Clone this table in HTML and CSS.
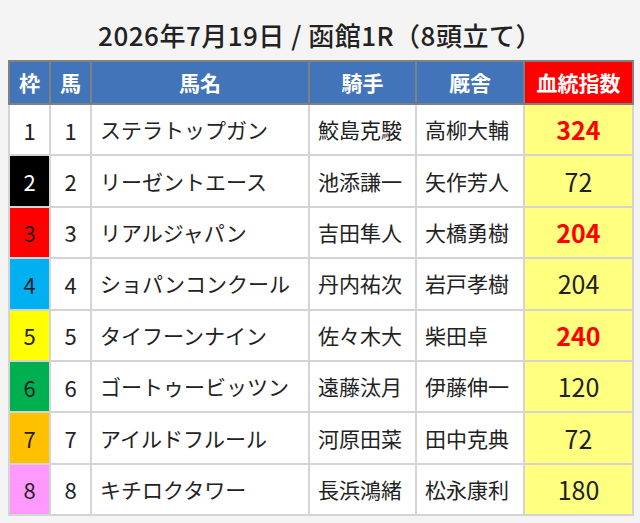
FILE: index.html
```html
<!DOCTYPE html>
<html lang="ja">
<head>
<meta charset="utf-8">
<link rel="stylesheet" href="styles.css">
</head>
<body>
<h1 class="title">2026年7月19日 / 函館1R（8頭立て）</h1>
<table class="race">
  <colgroup>
    <col class="c-waku"><col class="c-uma"><col class="c-name"><col class="c-jockey"><col class="c-trainer"><col class="c-index">
  </colgroup>
  <thead>
    <tr><th>枠</th><th>馬</th><th>馬名</th><th>騎手</th><th>厩舎</th><th class="h-index">血統指数</th></tr>
  </thead>
  <tbody>
    <tr><td class="waku w1">1</td><td class="num">1</td><td class="name">ステラトップガン</td><td class="name">鮫島克駿</td><td class="name">高柳大輔</td><td class="idx hi">324</td></tr>
    <tr><td class="waku w2">2</td><td class="num">2</td><td class="name">リーゼントエース</td><td class="name">池添謙一</td><td class="name">矢作芳人</td><td class="idx">72</td></tr>
    <tr><td class="waku w3">3</td><td class="num">3</td><td class="name">リアルジャパン</td><td class="name">吉田隼人</td><td class="name">大橋勇樹</td><td class="idx hi">204</td></tr>
    <tr><td class="waku w4">4</td><td class="num">4</td><td class="name">ショパンコンクール</td><td class="name">丹内祐次</td><td class="name">岩戸孝樹</td><td class="idx">204</td></tr>
    <tr><td class="waku w5">5</td><td class="num">5</td><td class="name">タイフーンナイン</td><td class="name">佐々木大</td><td class="name">柴田卓</td><td class="idx hi">240</td></tr>
    <tr><td class="waku w6">6</td><td class="num">6</td><td class="name">ゴートゥービッツン</td><td class="name">遠藤汰月</td><td class="name">伊藤伸一</td><td class="idx">120</td></tr>
    <tr><td class="waku w7">7</td><td class="num">7</td><td class="name">アイルドフルール</td><td class="name">河原田菜</td><td class="name">田中克典</td><td class="idx">72</td></tr>
    <tr><td class="waku w8">8</td><td class="num">8</td><td class="name">キチロクタワー</td><td class="name">長浜鴻緒</td><td class="name">松永康利</td><td class="idx">180</td></tr>
  </tbody>
</table>
</body>
</html>
```

FILE: styles.css
```css
html, body {
  margin: 0;
  padding: 0;
  background: #f4f4f4;
}
body {
  padding: 0 8px 0 8px;
  font-family: "Noto Sans CJK JP", "Noto Sans", sans-serif;
  color: #222;
}
.title {
  margin: 19px 0 9px;
  font-size: 26px;
  line-height: 32px;
  letter-spacing: 0.5px;
  font-weight: 500;
  text-align: center;
  color: #222;
}
.race {
  width: 624px;
  border-collapse: collapse;
  table-layout: fixed;
  background: #fff;
}
.c-waku { width: 41px; }
.c-uma { width: 41px; }
.c-name { width: 218px; }
.c-jockey { width: 107px; }
.c-trainer { width: 108px; }
.c-index { width: 109px; }
.race th {
  height: 41px;
  padding: 0;
  border: 2px solid #808080;
  background: #4274ba;
  color: #fff;
  font-size: 21px;
  font-weight: 700;
  text-align: center;
  line-height: 1;
}
.race th.h-index {
  background: #ff0000;
}
.race td {
  height: 49.4px;
  padding: 0;
  border: 2px solid #d4d4d4;
  font-size: 21px;
  line-height: 1;
  color: #222;
  text-align: center;
  white-space: nowrap;
}
.race td.name {
  text-align: left;
  padding-left: 8px;
}
.race td.num, .race td.waku {
  font-size: 22px;
}
.w1 { background: #fff; }
.w2 { background: #000; color: #fff !important; }
.w3 { background: #ff0000; }
.w4 { background: #00b0f0; }
.w5 { background: #ffff00; }
.w6 { background: #00b050; }
.w7 { background: #ffc000; }
.w8 { background: #ff99ff; }
.race td.idx {
  background: #ffff80;
  font-size: 25px;
}
.race td.idx.hi {
  color: #ff0000;
  font-weight: 700;
}
```
